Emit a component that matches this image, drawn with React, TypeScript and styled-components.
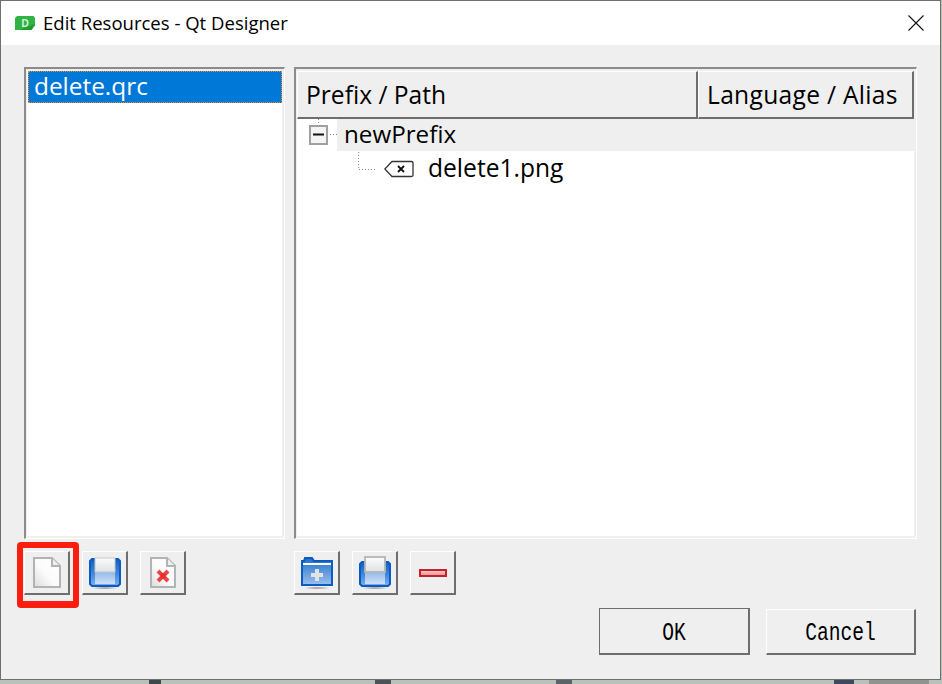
import React from 'react';
import styled, { createGlobalStyle } from 'styled-components';

const GlobalStyle = createGlobalStyle`
  html, body {
    margin: 0;
    padding: 0;
    background: #b9c2ba;
    overflow: hidden;
  }
  * {
    box-sizing: border-box;
  }
`;

const uiFont = `'Open Sans', 'Noto Sans', 'Liberation Sans', sans-serif`;

const Desktop = styled.div`
  width: 942px;
  height: 684px;
  background: #b9c2ba;
`;

const Window = styled.div`
  width: 941px;
  height: 680px;
  display: flex;
  flex-direction: column;
  background: #efefef;
  border: 1px solid #6f6f6f;
  font-family: ${uiFont};
  color: #000;
`;

const TitleBar = styled.div`
  height: 44px;
  flex: none;
  display: flex;
  align-items: center;
  padding: 0 14px;
  background: #fff;
`;

const TitleText = styled.div`
  margin-left: 8px;
  padding-bottom: 2px;
  font-size: 18.55px;
  white-space: nowrap;
`;

const CloseButton = styled.div`
  margin-left: auto;
  display: flex;
  margin-right: 2px;
`;

const Body = styled.div`
  flex: 1;
  padding: 22px 23px 0 23px;
  display: flex;
  flex-direction: column;
  position: relative;
`;

const Panes = styled.div`
  display: grid;
  grid-template-columns: 261px 623px;
  column-gap: 9px;
  height: 472px;
`;

const Sunken = styled.div`
  border-top: 2px solid #8c8c8c;
  border-left: 2px solid #8c8c8c;
  border-right: 1px solid #fff;
  border-bottom: 1px solid #fff;
  background: #efefef;
  padding: 2px 2px 2px 1px;
  display: flex;
  flex-direction: column;
`;

const ListArea = styled.div`
  flex: 1;
  background: #fff;
`;

const ListItem = styled.div`
  height: 32px;
  margin-left: 1px;
  padding: 0 0 3px 6px;
  display: flex;
  align-items: center;
  background: #0078d7;
  color: #fff;
  font-size: 24.4px;
  outline: 1px dotted #f08a24;
  outline-offset: -1px;
`;

const Header = styled.div`
  display: grid;
  grid-template-columns: 401px 216px;
  height: 48px;
  flex: none;
`;

const HeaderCell = styled.div<{ $spacing?: number }>`
  display: flex;
  align-items: center;
  padding-left: 8px;
  font-size: 24.6px;
  letter-spacing: ${(p) => p.$spacing ?? 0}px;
  background: #efefef;
  border-top: 1px solid #fff;
  border-left: 1px solid #fff;
  border-right: 2px solid #6e6e6e;
  border-bottom: 2px solid #6e6e6e;
  white-space: nowrap;
`;

const TreeArea = styled.div`
  flex: 1;
  background: #fff;
  font-size: 24.6px;
`;

const TreeRow = styled.div<{ $height: number }>`
  height: ${(p) => p.$height}px;
  display: flex;
  align-items: center;
`;

const Branch = styled.svg`
  flex: none;
  display: block;
`;

const RootLabel = styled.div`
  flex: 1;
  height: 100%;
  display: flex;
  align-items: center;
  padding: 0 0 4px 7px;
  font-size: 24.2px;
  background: #efefef;
`;

const ChildLabel = styled.div`
  margin-left: 14px;
  padding-bottom: 3px;
`;

const ToolRow = styled.div`
  margin-top: 12px;
  display: flex;
`;

const ToolGroup = styled.div<{ $width: number }>`
  width: ${(p) => p.$width}px;
  display: flex;
  gap: 12px;
`;

const ToolButton = styled.div`
  width: 46px;
  height: 44px;
  display: flex;
  align-items: center;
  justify-content: center;
  background: #efefef;
  border-top: 1px solid #fff;
  border-left: 1px solid #fff;
  border-right: 2px solid #6e6e6e;
  border-bottom: 2px solid #6e6e6e;
`;

const Highlight = styled.div`
  position: absolute;
  left: 16px;
  top: 497px;
  width: 62px;
  height: 66px;
  border: 6px solid #fb1e10;
  border-bottom-width: 7px;
  border-radius: 4px;
`;

const DialogRow = styled.div`
  margin-top: 13px;
  display: flex;
  justify-content: flex-end;
  align-items: flex-end;
  gap: 16px;
  padding-right: 1px;
`;

const DialogButton = styled.div<{ $primary?: boolean }>`
  width: ${(p) => (p.$primary ? 151 : 150)}px;
  height: ${(p) => (p.$primary ? 47 : 46)}px;
  padding-top: ${(p) => (p.$primary ? 6 : 5)}px;
  display: flex;
  align-items: center;
  justify-content: center;
  background: #efefef;
  border-top: 1px solid ${(p) => (p.$primary ? '#6e6e6e' : '#fff')};
  border-left: 1px solid ${(p) => (p.$primary ? '#6e6e6e' : '#fff')};
  border-right: 2px solid #6e6e6e;
  border-bottom: 2px solid #6e6e6e;
`;

// the original caption is a narrow, tall fixed-pitch face
const DialogCaption = styled.span`
  display: inline-block;
  font-family: 'Liberation Mono', 'Noto Sans CJK SC', monospace;
  font-size: 19.6px;
  transform: scaleY(1.28);
`;

const Taskbar = styled.div`
  height: 4px;
  display: flex;
  background: #b9c2ba;
`;

const TaskSpot = styled.div<{ $left: number; $width: number; $color: string }>`
  margin-left: ${(p) => p.$left}px;
  width: ${(p) => p.$width}px;
  background: ${(p) => p.$color};
`;

const AppIcon = () => (
  <svg width="20" height="14" viewBox="0 0 20 14">
    <path d="M2 0H18.5L20 2V9.5L16.5 14H0V2Z" fill="#2fb344" />
    <path d="M20 8L16.5 14H5L20 8Z" fill="#1f9a35" />
    <text x="10" y="11" fontSize="10" fontFamily="Liberation Sans" fontWeight="700" textAnchor="middle" fill="#d8f5dc">
      D
    </text>
  </svg>
);

const CloseIcon = () => (
  <svg width="16" height="16" viewBox="0 0 16 16">
    <path d="M0.5 0.5L15.5 15.5M15.5 0.5L0.5 15.5" stroke="#111" strokeWidth="1.1" fill="none" />
  </svg>
);

const Defs = () => (
  <svg width="0" height="0" style={{ position: 'absolute' }}>
    <defs>
      <linearGradient id="paper" x1="1" y1="0" x2="0" y2="1">
        <stop offset="0" stopColor="#ffffff" />
        <stop offset="0.55" stopColor="#fbfbfb" />
        <stop offset="1" stopColor="#dcdcdc" />
      </linearGradient>
      <linearGradient id="disk" x1="0" y1="0" x2="0" y2="1">
        <stop offset="0" stopColor="#0f5fc4" />
        <stop offset="0.5" stopColor="#3c86da" />
        <stop offset="1" stopColor="#7fb0ea" />
      </linearGradient>
      <linearGradient id="panel" x1="0" y1="0" x2="0" y2="1">
        <stop offset="0" stopColor="#8db6ea" />
        <stop offset="1" stopColor="#cfe0f6" />
      </linearGradient>
      <linearGradient id="label" x1="0" y1="0" x2="0" y2="1">
        <stop offset="0" stopColor="#fbfbfb" />
        <stop offset="1" stopColor="#dfe3e3" />
      </linearGradient>
      <linearGradient id="folder" x1="0" y1="0" x2="0" y2="1">
        <stop offset="0" stopColor="#1f6ecb" />
        <stop offset="1" stopColor="#9dc0ec" />
      </linearGradient>
      <linearGradient id="bar" x1="0" y1="0" x2="0" y2="1">
        <stop offset="0" stopColor="#fbd0d0" />
        <stop offset="1" stopColor="#ee8a8a" />
      </linearGradient>
      <radialGradient id="foot" cx="0.5" cy="0.5" r="0.5">
        <stop offset="0" stopColor="#8f8f8f" />
        <stop offset="1" stopColor="#efefef" />
      </radialGradient>
    </defs>
  </svg>
);

const NewFileIcon = () => (
  <svg width="32" height="34" viewBox="0 0 32 34">
    <path d="M3 2H21L29 10V31H3Z" fill="url(#paper)" stroke="#b3b3b3" strokeWidth="2" />
    <path d="M21 2V10H29" fill="#efefef" stroke="#b3b3b3" strokeWidth="2" />
  </svg>
);

const SaveIcon = ({ raised }: { raised?: boolean }) => (
  <svg width="34" height="34" viewBox="0 0 34 34">
    <ellipse cx="17" cy="32" rx="13" ry="1.5" fill="url(#foot)" />
    <path
      d={raised ? 'M2 8L4 6H30L32 8V28L30 30H4L2 28Z' : 'M2 5L4 3H30L32 5V28L30 30H4L2 28Z'}
      fill="url(#disk)"
      stroke="#0a5cc4"
      strokeWidth="2"
    />
    <rect x="7" y="15" width="20" height="13" fill="url(#panel)" />
    <rect
      x="7"
      y={raised ? 1 : 2}
      width="20"
      height={raised ? 15 : 14}
      fill="url(#label)"
      stroke={raised ? '#b5b5b5' : '#c8c8c8'}
      strokeWidth={raised ? 1.8 : 1}
    />
  </svg>
);

const RemoveFileIcon = () => (
  <svg width="28" height="34" viewBox="0 0 28 34">
    <path d="M2 2H18L26 10V31H2Z" fill="url(#paper)" stroke="#b3b3b3" strokeWidth="2" />
    <path d="M18 2V10H26" fill="#efefef" stroke="#b3b3b3" strokeWidth="2" />
    <path d="M9 15L19 25M19 15L9 25" stroke="#ee4444" strokeWidth="4" />
    <rect x="11.5" y="17.5" width="5" height="5" fill="#e52f2f" />
  </svg>
);

const AddFolderIcon = () => (
  <svg width="34" height="34" viewBox="0 0 34 34">
    <ellipse cx="17" cy="32" rx="13" ry="1.5" fill="url(#foot)" />
    <path d="M2 5H4L5 2H12L14 5H32V29H2Z" fill="url(#folder)" stroke="#0a5cc4" strokeWidth="2" />
    <rect x="3" y="7" width="28" height="2" fill="#fff" />
    <path d="M17 13V25M11 19H23" stroke="#e0e3e6" strokeWidth="4" />
  </svg>
);

const RemoveIcon = () => (
  <svg width="28" height="8" viewBox="0 0 28 8">
    <rect x="1" y="1" width="26" height="6" fill="url(#bar)" stroke="#c4222a" strokeWidth="2" />
  </svg>
);

const BackspaceIcon = () => (
  <svg width="30" height="18" viewBox="0 0 30 18">
    <path
      d="M8 1.5H27.5Q29 1.5 29 3V15Q29 16.5 27.5 16.5H8L0.8 9Z"
      fill="none"
      stroke="#333"
      strokeWidth="1.3"
    />
    <path d="M14 6L20 12M20 6L14 12" stroke="#111" strokeWidth="1.8" />
  </svg>
);

export default function App() {
  return (
    <Desktop>
      <GlobalStyle />
      <Defs />
      <Window>
        <TitleBar>
          <AppIcon />
          <TitleText>Edit Resources - Qt Designer</TitleText>
          <CloseButton>
            <CloseIcon />
          </CloseButton>
        </TitleBar>
        <Body>
          <Panes>
            <Sunken>
              <ListArea>
                <ListItem>delete.qrc</ListItem>
              </ListArea>
            </Sunken>
            <Sunken>
              <Header>
                <HeaderCell>Prefix / Path</HeaderCell>
                <HeaderCell $spacing={0.3}>Language / Alias</HeaderCell>
              </Header>
              <TreeArea>
                <TreeRow $height={32}>
                  <Branch width="40" height="32" viewBox="0 0 40 32">
                    <path d="M21.5 0V6M30 15.5H40" stroke="#888" strokeDasharray="1 2" fill="none" />
                    <rect x="13" y="7" width="17" height="18" fill="#f4f4f4" stroke="#a0a0a0" strokeWidth="2" />
                    <path d="M16 15.5H27" stroke="#111" strokeWidth="2" />
                  </Branch>
                  <RootLabel>newPrefix</RootLabel>
                </TreeRow>
                <TreeRow $height={35}>
                  <Branch width="87" height="35" viewBox="0 0 87 35">
                    <path d="M61.5 1V18.5H79" stroke="#888" strokeDasharray="1 2" fill="none" />
                  </Branch>
                  <BackspaceIcon />
                  <ChildLabel>delete1.png</ChildLabel>
                </TreeRow>
              </TreeArea>
            </Sunken>
          </Panes>
          <ToolRow>
            <ToolGroup $width={270}>
              <ToolButton>
                <NewFileIcon />
              </ToolButton>
              <ToolButton>
                <SaveIcon />
              </ToolButton>
              <ToolButton>
                <RemoveFileIcon />
              </ToolButton>
            </ToolGroup>
            <ToolGroup $width={200}>
              <ToolButton>
                <AddFolderIcon />
              </ToolButton>
              <ToolButton>
                <SaveIcon raised />
              </ToolButton>
              <ToolButton>
                <RemoveIcon />
              </ToolButton>
            </ToolGroup>
          </ToolRow>
          <DialogRow>
            <DialogButton $primary>
              <DialogCaption>OK</DialogCaption>
            </DialogButton>
            <DialogButton>
              <DialogCaption>Cancel</DialogCaption>
            </DialogButton>
          </DialogRow>
          <Highlight />
        </Body>
      </Window>
      <Taskbar>
        <TaskSpot $left={149} $width={12} $color="#3c4a4e" />
        <TaskSpot $left={214} $width={16} $color="#4a5458" />
        <TaskSpot $left={165} $width={16} $color="#596468" />
        <TaskSpot $left={262} $width={20} $color="#3c4a5e" />
        <TaskSpot $left={15} $width={60} $color="#8f9490" />
      </Taskbar>
    </Desktop>
  );
}
